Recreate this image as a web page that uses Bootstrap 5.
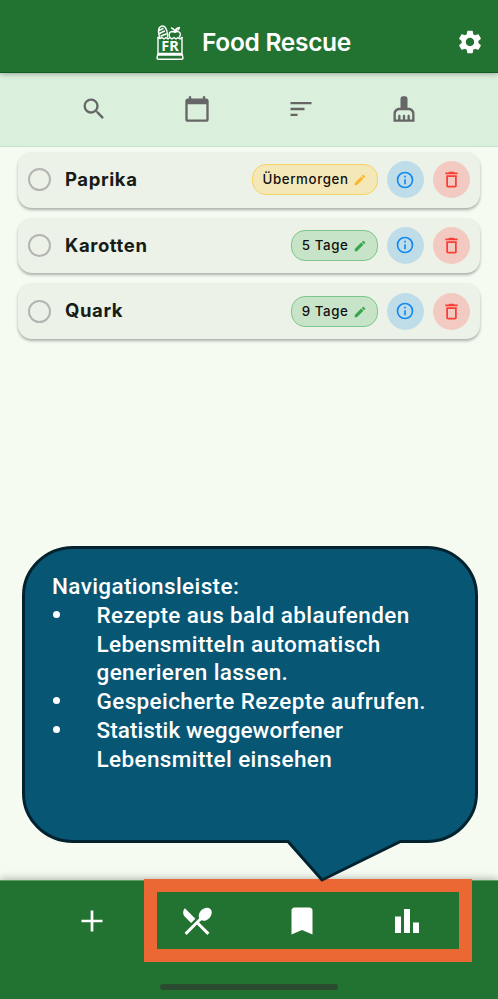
<!DOCTYPE html>
<html lang="de">
<head>
<meta charset="utf-8">
<meta name="viewport" content="width=device-width, initial-scale=1">
<title>Food Rescue</title>
<link href="https://cdn.jsdelivr.net/npm/bootstrap@5.3.0/dist/css/bootstrap.min.css" rel="stylesheet">
<style>
body{font-family:Inter,"Liberation Sans",sans-serif;background:#f5fbf0;color:#171c17}
.screen{width:498px;height:999px}
svg{display:block;fill:currentColor}
.topbar{height:73px;background:#227231;border-bottom:1px solid #0d5c20;box-shadow:0 1px 5px rgba(0,0,0,.3);padding:13px 0 0 8px}
.topbar h1{font-size:24.5px;letter-spacing:-.3px;margin-left:17px}
.gear{top:28px;right:14px}
.tools{height:74px;background:#daefdc;border-bottom:1px solid #c5e3c9;padding:0 42px 1px;color:#666}
.items{padding:5px 18px 0;gap:10.2px}
.food{height:55.5px;border-radius:14px;background:#edf2e8;box-shadow:0 2px 3px rgba(0,0,0,.3);padding:0 10.5px 0 9.5px}
.tick{width:23px;height:23px;border:2px solid #b3b5b2}
.food-name{font-size:18.5px;letter-spacing:.6px;margin-left:14.5px}
.due{height:31px;border:1px solid #7fc68a;border-radius:14px;background:#c8e4c8;color:#111;font-size:13.3px;letter-spacing:.6px;padding:1px 10px 0;gap:4px}
.due svg{color:#35a64b}
.due-soon{background:#f5e8b8;border-color:#f7d264}
.due-soon svg{color:#fcb62b}
.round{width:37px;height:37px;margin-left:9px}
.r-info{background:#bfdde9;color:#1389f0}
.r-del{background:#f2cac1;color:#fa3d35}
.callout{left:20px;top:543px;width:460px;height:341px;z-index:3}
.callout-text{left:32px;top:29px;width:400px;font:500 22.5px/28.8px Roboto,sans-serif;letter-spacing:.38px;color:#fff}
.callout-text ul{padding-left:44.5px}
.callout-text li::before{content:"";position:absolute;left:1px;width:7px;height:7px;border-radius:50%;margin-top:10px;background:#fff}
.snug{letter-spacing:.08px}
.navbar-low{height:119px;background:#227231;border-top:1px solid #5d9a66;box-shadow:0 -2px 7px rgba(0,0,0,.24);padding:21.5px 39px 0}
.frame{left:144px;top:879px;width:328px;height:83px;border:13px solid #eb6834;z-index:2}
.homebar{left:160px;bottom:9px;width:178px;height:6px;background:#2b4b30}
</style>
</head>
<body>
<div class="screen position-relative overflow-hidden d-flex flex-column">
  <header class="topbar d-flex align-items-center justify-content-center text-white position-relative z-1 flex-shrink-0">
    <svg width="30" height="36" viewBox="0 0 30 36" fill="none" stroke="#fff" stroke-width="1.4" stroke-linecap="round" stroke-linejoin="round">
      <g fill="none"><path d="M3 28V12.5M27 28V12.5M3 28.5h24l1 4.500q0 1.300-1.300 1.300H3.300Q2 34.300 2 33zM2.500 30h25"/><path d="M3 12.500l2 1 2-1 2 1.500 2-1.500 2 1.500 2-1.500 2 1.500 2-1.500 2 1.500 2-1.500 2 1.500 2-1.500"/>
      <path d="M4.500 12Q2.500 5 4.500 2.500Q7-.2 10 2Q13 6 12.500 12M4 5.500l4-2M4.500 8.500l5-2.500M6 11l5-2"/>
      <path d="M14.500 12q-1.500-5 2.500-5.500 1.500 0 3 .8 3-1.500 5 .5 1 2-.500 4.200M20 7Q19.500 4 16.500 3M20 6q1-3 4.500-3.500-.500 3-4.500 3.500"/></g>
      <text x="15" y="26.200" text-anchor="middle" font-family="Noto Sans, sans-serif" font-weight="700" font-size="14.500" fill="#fff" stroke="none">FR</text>
    </svg>
    <h1 class="fw-semibold mb-0">Food Rescue</h1>
    <svg class="gear position-absolute" width="28" height="28" viewBox="0 0 24 24"><path d="M19.140 12.940c.040-.300.060-.610.060-.940 0-.320-.020-.640-.070-.940l2.030-1.580c.180-.140.230-.410.120-.610l-1.920-3.320c-.120-.220-.370-.290-.590-.220l-2.390.960c-.500-.380-1.030-.700-1.620-.940l-.360-2.540c-.040-.240-.240-.410-.480-.410h-3.840c-.240 0-.430.170-.470.410l-.360 2.540c-.590.240-1.130.570-1.620.940l-2.390-.960c-.220-.080-.470 0-.590.220L2.740 8.870c-.120.210-.080.470.120.610l2.030 1.580c-.050.300-.090.630-.090.940s.020.640.070.940l-2.030 1.580c-.180.140-.230.410-.120.610l1.920 3.320c.120.220.370.290.590.220l2.390-.960c.500.380 1.030.700 1.620.940l.360 2.540c.050.240.240.410.480.410h3.840c.240 0 .440-.170.470-.410l.360-2.540c.590-.240 1.130-.560 1.620-.940l2.390.960c.220.080.470 0 .590-.220l1.920-3.320c.120-.220.070-.470-.120-.610l-2.010-1.580zM12 15.600c-1.980 0-3.600-1.620-3.600-3.600s1.620-3.600 3.600-3.600 3.600 1.620 3.600 3.600-1.620 3.600-3.600 3.600z"/></svg>
  </header>
  <div class="tools row g-0 row-cols-4 align-items-center flex-shrink-0">
    <div class="col d-flex justify-content-center"><svg width="28" height="28" viewBox="0 0 24 24"><path d="M15.500 14h-.790l-.280-.270A6.471 6.471 0 0 0 16 9.500 6.500 6.500 0 1 0 9.500 16c1.610 0 3.090-.590 4.230-1.570l.270.280v.790l5 4.990L20.490 19l-4.990-5zm-6 0C7.010 14 5 11.990 5 9.500S7.010 5 9.500 5 14 7.010 14 9.500 11.990 14 9.500 14z"/></svg></div>
    <div class="col d-flex justify-content-center"><svg width="28" height="28" viewBox="0 0 24 24"><path d="M20 3h-1V1h-2v2H7V1H5v2H4c-1.100 0-2 .900-2 2v16c0 1.100.900 2 2 2h16c1.100 0 2-.900 2-2V5c0-1.100-.900-2-2-2zm0 18H4V8h16v13z"/></svg></div>
    <div class="col d-flex justify-content-center"><svg width="28" height="28" viewBox="0 0 24 24"><path d="M3 18h6v-2H3v2zM3 6v2h18V6H3zm0 7h12v-2H3v2z"/></svg></div>
    <div class="col d-flex justify-content-center"><svg width="28" height="28" viewBox="0 0 24 24"><path d="M16 11h-1V3c0-1.100-.900-2-2-2h-2c-1.100 0-2 .900-2 2v8H8c-2.760 0-5 2.240-5 5v7h18v-7c0-2.760-2.240-5-5-5zm3 10h-2v-3c0-.550-.450-1-1-1s-1 .450-1 1v3h-2v-3c0-.550-.450-1-1-1s-1 .450-1 1v3H9v-3c0-.550-.450-1-1-1s-1 .450-1 1v3H5v-5c0-1.650 1.350-3 3-3h8c1.650 0 3 1.350 3 3v5z"/></svg></div>
  </div>
  <svg class="d-none">
    <symbol id="pen" viewBox="0 0 24 24"><path d="M3 17.250V21h3.750L17.810 9.940l-3.750-3.750L3 17.250zM20.710 7.040a1 1 0 0 0 0-1.410l-2.340-2.340a1 1 0 0 0-1.410 0l-1.830 1.830 3.750 3.750 1.830-1.830z"/></symbol>
    <symbol id="info" viewBox="0 0 24 24"><path d="M11 7h2v2h-2zm0 4h2v6h-2zm1-9a10 10 0 1 0 0 20 10 10 0 0 0 0-20zm0 18a8 8 0 1 1 0-16 8 8 0 0 1 0 16z"/></symbol>
    <symbol id="bin" viewBox="0 0 24 24"><path d="M6 19c0 1.100.900 2 2 2h8c1.100 0 2-.900 2-2V7H6v12zM8 9h8v10H8V9zm7.500-5l-1-1h-5l-1 1H5v2h14V4z"/></symbol>
  </svg>
  <main class="items d-flex flex-column flex-grow-1">
    <div class="food d-flex align-items-center">
      <span class="tick rounded-circle"></span><span class="food-name fw-bold me-auto">Paprika</span>
      <span class="due due-soon d-flex align-items-center fw-medium">Übermorgen<svg width="14" height="14"><use href="#pen"/></svg></span>
      <span class="round r-info rounded-circle d-flex align-items-center justify-content-center"><svg width="20" height="20"><use href="#info"/></svg></span>
      <span class="round r-del rounded-circle d-flex align-items-center justify-content-center"><svg width="21" height="21"><use href="#bin"/></svg></span>
    </div>
    <div class="food d-flex align-items-center">
      <span class="tick rounded-circle"></span><span class="food-name fw-bold me-auto">Karotten</span>
      <span class="due d-flex align-items-center fw-medium">5 Tage<svg width="14" height="14"><use href="#pen"/></svg></span>
      <span class="round r-info rounded-circle d-flex align-items-center justify-content-center"><svg width="20" height="20"><use href="#info"/></svg></span>
      <span class="round r-del rounded-circle d-flex align-items-center justify-content-center"><svg width="21" height="21"><use href="#bin"/></svg></span>
    </div>
    <div class="food d-flex align-items-center">
      <span class="tick rounded-circle"></span><span class="food-name fw-bold me-auto">Quark</span>
      <span class="due d-flex align-items-center fw-medium">9 Tage<svg width="14" height="14"><use href="#pen"/></svg></span>
      <span class="round r-info rounded-circle d-flex align-items-center justify-content-center"><svg width="20" height="20"><use href="#info"/></svg></span>
      <span class="round r-del rounded-circle d-flex align-items-center justify-content-center"><svg width="21" height="21"><use href="#bin"/></svg></span>
    </div>
  </main>
  <nav class="navbar-low row g-0 row-cols-4 align-items-start text-white flex-shrink-0">
    <div class="col d-flex justify-content-center"><svg width="36" height="36" viewBox="0 0 24 24"><path d="M19 12.900h-6.100V19h-1.800v-6.100H5v-1.800h6.100V5h1.800v6.100H19z"/></svg></div>
    <div class="col d-flex justify-content-center"><svg width="36" height="36" viewBox="0 0 24 24"><path d="M8.100 13.340l2.830-2.830L3.910 3.500a4.008 4.008 0 0 0 0 5.660l4.190 4.180zm6.780-1.810c1.530.710 3.680.210 5.270-1.380 1.910-1.910 2.280-4.650.810-6.120-1.460-1.460-4.200-1.100-6.120.810-1.590 1.590-2.090 3.740-1.380 5.270L3.700 19.870l1.410 1.410L12 14.410l6.880 6.880 1.410-1.410L13.410 13l1.470-1.470z"/></svg></div>
    <div class="col d-flex justify-content-center"><svg width="36" height="36" viewBox="0 0 24 24"><path d="M17 3H7c-1.100 0-2 .900-2 2v16l7-3 7 3V5c0-1.100-.900-2-2-2z"/></svg></div>
    <div class="col d-flex justify-content-center"><svg width="36" height="36" viewBox="0 0 24 24"><path d="M4 9h4v11H4zM10 4h4v16h-4zM16 13h4v7h-4z"/></svg></div>
  </nav>
  <div class="frame position-absolute"></div>
  <div class="homebar position-absolute rounded-pill"></div>
  <div class="callout position-absolute">
    <svg width="460" height="341" viewBox="0 0 460 341"><path d="M53 4.500H407A50 48 0 0 1 456.500 53V250A50 48 0 0 1 407 298.500H380.500L302 337 268 298.500H53A50 48 0 0 1 3.500 250V53A50 48 0 0 1 53 4.500Z" fill="#065674" stroke="#02222f" stroke-width="3"/></svg>
    <div class="callout-text position-absolute">
      <div>Navigationsleiste:</div>
      <ul class="list-unstyled mb-0">
        <li>Rezepte aus bald ablaufenden<br>Lebensmitteln automatisch<br>generieren lassen.</li>
        <li>Gespeicherte Rezepte aufrufen.</li>
        <li><span class="snug">Statistik weggeworfener</span><br>Lebensmittel einsehen</li>
      </ul>
    </div>
  </div>
</div>
<script src="https://cdn.jsdelivr.net/npm/bootstrap@5.3.0/dist/js/bootstrap.bundle.min.js"></script>
</body>
</html>
